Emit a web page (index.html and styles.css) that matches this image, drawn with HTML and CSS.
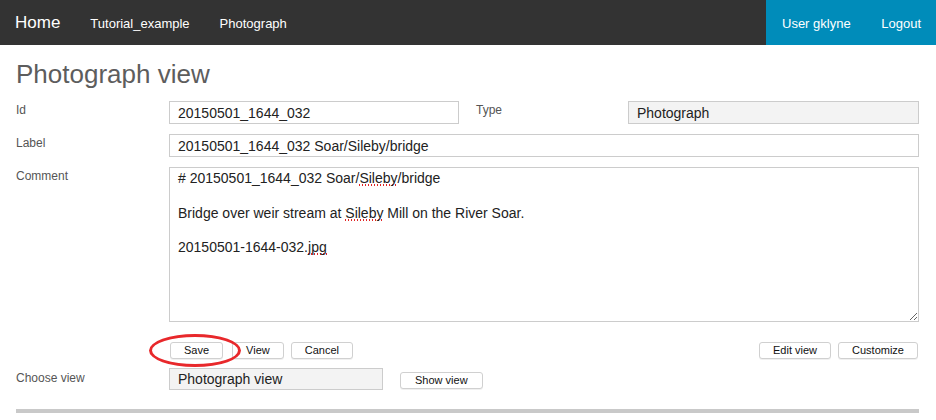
FILE: index.html
```html
<!DOCTYPE html>
<html>
<head>
<meta charset="utf-8">
<link rel="stylesheet" href="styles.css">
</head>
<body>
<nav class="topbar">
  <div class="nav-left">
    <a class="brand">Home</a>
    <a class="nav-link">Tutorial_example</a>
    <a class="nav-link">Photograph</a>
  </div>
  <div class="nav-right">
    <a class="nav-link">User gklyne</a>
    <a class="nav-link">Logout</a>
  </div>
</nav>
<main class="page">
  <h1 class="title">Photograph view</h1>
  <div class="row row-id">
    <label class="lbl">Id</label>
    <div class="field">20150501_1644_032</div>
    <label class="lbl lbl-type">Type</label>
    <div class="field field-ro">Photograph</div>
  </div>
  <div class="row">
    <label class="lbl">Label</label>
    <div class="field">20150501_1644_032 Soar/Sileby/bridge</div>
  </div>
  <div class="row">
    <label class="lbl">Comment</label>
    <div class="textarea"><div># 20150501_1644_032 Soar/<span class="sp">Sileby</span>/bridge</div><div>&nbsp;</div><div>Bridge over weir stream at <span class="sp">Sileby</span> Mill on the River Soar.</div><div>&nbsp;</div><div>20150501-1644-032.<span class="sp">jpg</span></div></div>
  </div>
  <div class="row row-buttons">
    <div></div>
    <div class="btns">
      <div class="btn-group">
        <span class="save-wrap"><button class="btn">Save</button><span class="ring"></span></span>
        <button class="btn">View</button>
        <button class="btn">Cancel</button>
      </div>
      <div class="btn-group btn-group-right">
        <button class="btn">Edit view</button>
        <button class="btn">Customize</button>
      </div>
    </div>
  </div>
  <div class="row row-choose">
    <label class="lbl">Choose view</label>
    <div class="choose">
      <div class="field field-ro field-choose">Photograph view</div>
      <button class="btn btn-show">Show view</button>
    </div>
  </div>
  <div class="footer-bar"></div>
</main>
</body>
</html>
```
FILE: styles.css
```css
* { box-sizing: border-box; }
html, body { margin: 0; padding: 0; background: #fff; }
body { font-family: "Liberation Sans", Arial, sans-serif; color: #222; }

.topbar {
  height: 45px;
  background: #333;
  display: flex;
  justify-content: space-between;
  align-items: stretch;
}
.nav-left, .nav-right { display: flex; align-items: center; }
.nav-left { padding-left: 15px; }
.nav-right {
  background: #008cba;
  width: 170px;
  justify-content: space-between;
  padding: 1px 15px 0 16px;
}
.brand { color: #fff; font-size: 17px; line-height: 45px; margin-right: 15px; }
.nav-link { color: #fff; font-size: 13px; line-height: 45px; padding: 1px 15px 0 15px; }
.nav-right .nav-link { padding: 0; }

.page { padding: 0 17px 0 16px; }
.title {
  margin: 14px 0 11px 0;
  font-size: 26px;
  line-height: 31px;
  font-weight: normal;
  color: #5d5d5d;
}
.row {
  display: grid;
  grid-template-columns: 153px 1fr;
  margin-bottom: 10px;
}
.row-id { grid-template-columns: 153px 290px 1fr 291px; }
.lbl { font-size: 12px; color: #555; line-height: 15px; padding-top: 2px; }
.lbl-type { padding-left: 17px; }
.field {
  height: 23px;
  border: 1px solid #ccc;
  padding: 0 8px;
  font-size: 14px;
  line-height: 22px;
  color: #222;
  background: #fff;
}
.field-ro { background: #f3f3f3; }
.textarea {
  height: 155px;
  border: 1px solid #ccc;
  padding: 2px 8px;
  font-size: 14px;
  line-height: 17.3px;
  color: #222;
  resize: both;
  overflow: auto;
}
.sp {
  background-image: linear-gradient(to right, #e02424 50%, transparent 50%);
  background-size: 3px 2px;
  background-repeat: repeat-x;
  background-position: 0 100%;
}
.row-buttons { margin-top: 20px; margin-bottom: 9px; }
.btns { display: flex; justify-content: space-between; padding: 0 1px; }
.btn-group { display: flex; gap: 7px; }
.btn {
  height: 17px;
  padding: 0 13px;
  border: 1px solid #d0d0d0;
  border-radius: 3px;
  background: #fff;
  font-family: "Liberation Sans", Arial, sans-serif;
  font-size: 11px;
  line-height: 15px;
  color: #111;
  box-shadow: 0 1px 0 rgba(0,0,0,0.06);
}
.save-wrap { position: relative; display: inline-flex; margin-right: 2px; }
.ring {
  position: absolute;
  left: -21px;
  top: -8px;
  width: 92px;
  height: 33px;
  border: 3px solid #e8282b;
  border-radius: 50%;
  pointer-events: none;
}
.row-choose { align-items: start; margin-bottom: 19px; }
.row-choose .lbl { padding-top: 3px; }
.choose { display: flex; align-items: center; }
.field-choose { width: 214px; height: 22px; line-height: 21px; }
.btn-show { margin-left: 17px; margin-top: 3px; padding: 0 14px; }
.footer-bar { height: 4px; background: #c9c9c9; }
```
